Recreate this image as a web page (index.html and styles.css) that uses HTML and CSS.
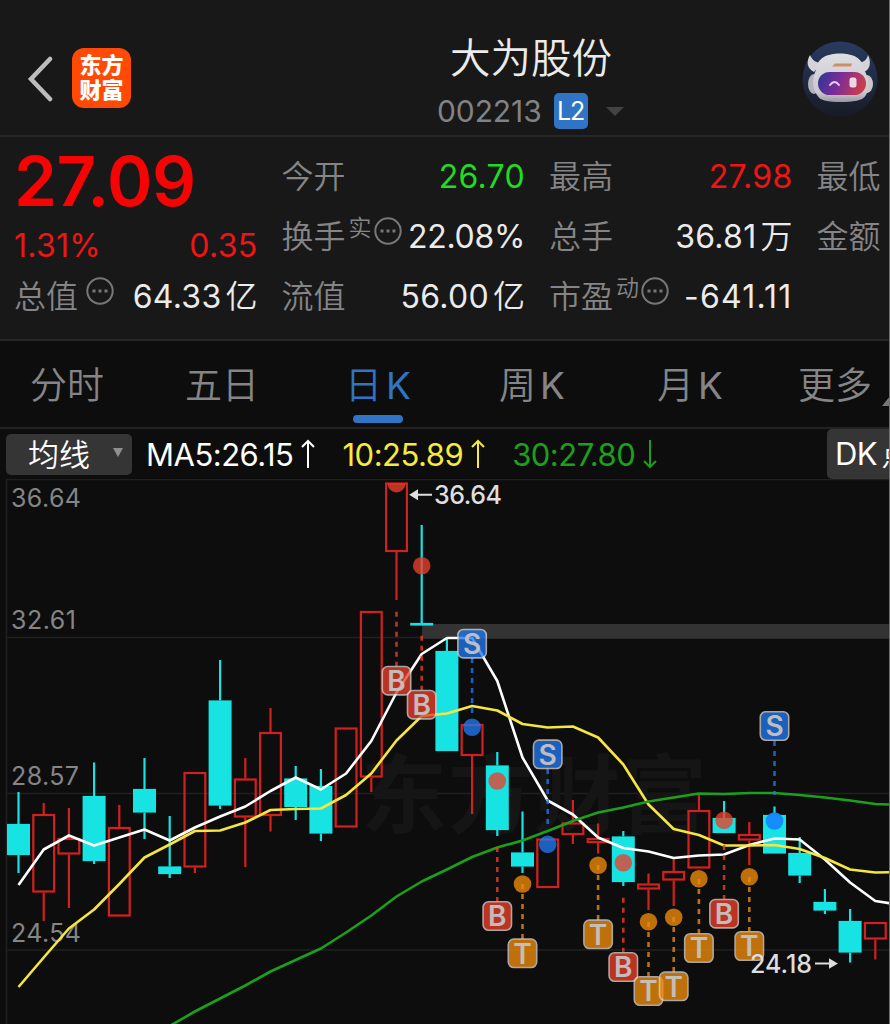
FILE: index.html
```html
<!DOCTYPE html>
<html lang="zh-CN">
<head>
    <meta charset="utf-8">
    <title>大为股份 002213</title>
    <link rel="stylesheet" href="styles.css">
</head>
<body>
    <div class="header">
        <div class="header-left">
            <svg class="back" width="28" height="46" viewBox="0 0 28 46"><path d="M24 3 L5 23 L24 43"/></svg>
            <div class="logo"><span>东方</span><span>财富</span></div>
        </div>
        <div class="title">
            <h1>大为股份</h1>
            <div class="code-row">
                <span class="code">002213</span>
                <span class="level">L2</span>
                <span class="down"></span>
            </div>
        </div>
        <svg class="robot" width="76" height="76" viewBox="0 0 76 76">
            <defs>
                <linearGradient id="sky" x1="0" y1="0" x2="0" y2="1">
                    <stop offset="0" stop-color="#293b5f"/><stop offset="1" stop-color="#181b26"/>
                </linearGradient>
                <linearGradient id="shell" x1="0" y1="0" x2="0" y2="1">
                    <stop offset="0" stop-color="#dedde2"/><stop offset="0.8" stop-color="#cbc9d0"/><stop offset="1" stop-color="#9998a3"/>
                </linearGradient>
                <linearGradient id="visor" x1="0" y1="0" x2="1" y2="0.2">
                    <stop offset="0" stop-color="#293698"/><stop offset="0.5" stop-color="#7c2c96"/><stop offset="1" stop-color="#c83c50"/>
                </linearGradient>
            </defs>
            <circle cx="38" cy="38" r="37.5" fill="url(#sky)"/>
            <path d="M8 14 C4 21 5 27 12 31 L20 22 C14 22 10 19 8 14 Z M66 14 C69 20 69 28 62 31 L54 22 C61 22 65 19 66 14 Z" fill="#d4d3d8"/>
            <ellipse cx="12" cy="43" rx="6" ry="10" fill="#b3b2bd"/>
            <ellipse cx="65" cy="43" rx="6" ry="9" fill="#c8c7ce"/>
            <path d="M14 29 C15 17 25 12.500 38 12.500 C51 12.500 61 17 62 29 C67 36 68 47 64 54 C61 60 51 61 39 61 C26 61 18 60 15 54 C10 47 10 37 14 29 Z" fill="url(#shell)"/>
            <path d="M30 25.500L33 22.500H50L49 25.500Z" fill="#cf8f64"/>
            <rect x="16" y="31" width="48" height="23" rx="11.5" fill="url(#visor)"/>
            <path d="M28 44 Q32.500 38 37 44" stroke="#d8d4ef" stroke-width="2" fill="none" stroke-linecap="round"/>
            <rect x="47.500" y="36.500" width="7" height="10" rx="2.500" fill="#ead9e4"/>
        </svg>
    </div>

    <div class="quote">
        <div class="col first">
            <div class="price">27.09</div>
            <div class="item change red"><span>1.31%</span><span>0.35</span></div>
            <div class="item"><label>总值 <svg class="more" viewBox="0 0 28 28"><circle cx="14" cy="14" r="12.700"/><path d="M6.500 14h3M12.500 14h3M18.500 14h3"/></svg></label><span>64.33<i>亿</i></span></div>
        </div>
        <div class="col">
            <div class="item"><label>今开</label><span class="green">26.70</span></div>
            <div class="item"><label>换手<sup>实</sup><svg class="more" viewBox="0 0 28 28"><circle cx="14" cy="14" r="12.700"/><path d="M6.500 14h3M12.500 14h3M18.500 14h3"/></svg></label><span class="tight">22.08%</span></div>
            <div class="item"><label>流值</label><span>56.00<i>亿</i></span></div>
        </div>
        <div class="col">
            <div class="item"><label>最高</label><span class="red">27.98</span></div>
            <div class="item"><label>总手</label><span>36.81<i>万</i></span></div>
            <div class="item"><label>市盈<sup>动</sup><svg class="more" viewBox="0 0 28 28"><circle cx="14" cy="14" r="12.700"/><path d="M6.500 14h3M12.500 14h3M18.500 14h3"/></svg></label><span class="wide">-641.11</span></div>
        </div>
        <div class="col cut">
            <div class="item"><label>最低</label></div>
            <div class="item"><label>金额</label></div>
        </div>
    </div>

    <div class="tabs">
        <div class="tab">分时</div>
        <div class="tab">五日</div>
        <div class="tab active">日<b>K</b></div>
        <div class="tab">周<b>K</b></div>
        <div class="tab">月<b>K</b></div>
        <div class="tab last">更多<span class="corner"></span></div>
    </div>

    <div class="ma-bar">
        <div class="select">均线<span class="caret"></span></div>
        <div class="ma white">MA5:26.15<svg width="14" height="30" viewBox="0 0 14 30"><path d="M7 29V2M1 8L7 2L13 8"/></svg></div>
        <div class="ma yellow">10:25.89<svg width="14" height="30" viewBox="0 0 14 30"><path d="M7 29V2M1 8L7 2L13 8"/></svg></div>
        <div class="ma dgreen">30:27.80<svg width="14" height="30" viewBox="0 0 14 30"><path d="M7 1V28M1 22L7 28L13 22"/></svg></div>
        <div class="dk">DK<span>点</span></div>
    </div>

    <svg id="chart" class="chart" width="889" height="545" viewBox="0 479 889 545"></svg>

    <script src="chart.js"></script>
</body>
</html>
```

FILE: styles.css
```css
* {
    box-sizing: border-box;
}
html {
    overflow: hidden;
}
body {
    margin: 0;
    width: 890px;
    height: 1024px;
    overflow: hidden;
    border-right: 1px solid #6f6f6f;
    background: #0d0d0d;
    color: #ebebeb;
    font-family: Inter, "Noto Sans CJK SC", sans-serif;
}
.header {
    display: flex;
    justify-content: space-between;
    height: 137px;
    background: #181818;
    border-bottom: 2px solid #272727;
}
.header-left {
    display: flex;
    width: 260px;
    padding: 48px 0 0 26px;
}
.back {
    margin: 8px 18px 0 0;
}
.back path {
    fill: none;
    stroke: #bdbdbd;
    stroke-width: 4.5;
    stroke-linecap: round;
}
.logo {
    display: flex;
    flex-direction: column;
    align-items: center;
    justify-content: center;
    width: 59px;
    height: 60px;
    border-radius: 12px;
    background: #ff4a06;
    color: #fff;
    font-size: 22px;
    font-weight: 900;
    line-height: 25px;
}
.title {
    width: 330px;
    padding-top: 34px;
    text-align: center;
}
h1 {
    margin: 0;
    font-size: 40.5px;
    font-weight: 350;
    line-height: 50px;
}
.code-row {
    display: flex;
    align-items: center;
    height: 36px;
    margin: 9px 0 0 71px;
}
.code {
    color: #828284;
    font-size: 30px;
    font-weight: 400;
    letter-spacing: -0.1px;
}
.level {
    width: 34px;
    height: 36px;
    margin-left: 12px;
    border-radius: 5px;
    background: #2f74c5;
    color: #fff;
    font-size: 25px;
    line-height: 37px;
    letter-spacing: -1px;
}
.down {
    margin-left: 18px;
    border: 9px solid transparent;
    border-top-color: #434343;
    border-bottom: 0;
}
.robot {
    margin: 41px 11px 0 0;
}
.quote {
    display: flex;
    gap: 24px;
    height: 204px;
    padding: 10px 0 0 14px;
    background: #181818;
    border-bottom: 2px solid #272727;
}
.col {
    flex: none;
    width: 243.5px;
}
.cut {
    width: 70px;
}
.item {
    display: flex;
    justify-content: space-between;
    align-items: center;
    height: 60px;
    font-size: 32px;
    white-space: nowrap;
    font-weight: 350;
}
.item label {
    display: flex;
    align-items: center;
    line-height: 44px;
    padding-bottom: 1px;
    color: #858587;
}
.item > span {
    line-height: 44px;
    font-weight: 400;
    letter-spacing: 0.3px;
}
.item > .tight {
    letter-spacing: -0.3px;
}
.item > .wide {
    letter-spacing: 1.2px;
}
.item i {
    font-style: normal;
    font-weight: 350;
    letter-spacing: 0;
    margin-left: 4px;
}
.item sup {
    font-size: 23px;
    line-height: 24px;
    margin: 0 2px 18px 3px;
    vertical-align: baseline;
}
.change {
    padding-top: 17px;
}
.more {
    width: 28px;
    height: 28px;
    margin-bottom: 12px;
    fill: none;
    stroke: #77777a;
    stroke-width: 2;
}
.first .more {
    margin-left: 8px;
}
.more path {
    stroke-width: 3;
}
.price {
    height: 60px;
    color: #f60404;
    font-size: 69px;
    font-weight: 560;
    line-height: 68px;
    letter-spacing: -0.4px;
}
.red {
    color: #f01515;
}
.green {
    color: #1fdd1f;
}
.tabs {
    display: grid;
    grid-template-columns: 155px 163px 151px 158px 141px 91px;
    height: 88px;
    padding-left: 30px;
    border-bottom: 2px solid #222;
    color: #858587;
    font-size: 37px;
    font-weight: 350;
    line-height: 89px;
}
.tab {
    position: relative;
    white-space: nowrap;
}
.tab:nth-child(3) {
    margin-left: -3px;
}
.tab b {
    font-weight: 400;
    margin-left: 4px;
}
.active {
    color: #2f74c5;
}
.active::after {
    content: "";
    position: absolute;
    left: 8px;
    bottom: 7px;
    width: 50px;
    height: 8px;
    border-radius: 4px;
    background: #2f74c5;
}
.last {
    display: flex;
    overflow: hidden;
}
.corner {
    align-self: flex-end;
    flex: none;
    margin: 0 0 24px 10px;
    border-left: 8px solid transparent;
    border-bottom: 10px solid #77777a;
}
.ma-bar {
    display: flex;
    align-items: center;
    height: 50px;
    padding-left: 6px;
    font-size: 31px;
    font-weight: 400;
    white-space: nowrap;
    letter-spacing: -0.5px;
}
.select {
    display: flex;
    align-items: center;
    width: 126px;
    height: 41px;
    margin-right: 14px;
    padding: 0 0 3px 22px;
    border-radius: 5px;
    background: #353535;
    color: #fff;
    font-weight: 350;
    letter-spacing: 0;
}
.caret {
    margin-left: 23px;
    border: 5.5px solid transparent;
    border-top: 9px solid #909090;
    border-bottom: 0;
}
.ma {
    display: flex;
    align-items: center;
    margin-right: 27px;
}
.ma svg {
    margin-left: 8px;
    fill: none;
    stroke: currentColor;
    stroke-width: 2;
}
.white {
    color: #fff;
}
.yellow {
    color: #f7ea3e;
}
.dgreen {
    color: #1ca01c;
}
.dk {
    width: 62px;
    height: 50px;
    margin-left: auto;
    padding-left: 8px;
    border-radius: 5px 0 0 5px;
    background: #353535;
    color: #fff;
    line-height: 50px;
    overflow: hidden;
}
.dk span {
    margin-left: 4px;
    font-weight: 350;
}
.chart {
    display: block;
}
.grid {
    stroke: #202020;
    stroke-width: 1.6;
    fill: none;
}
.watermark {
    fill: #151515;
    font-size: 86px;
    font-weight: 700;
}
.axis {
    fill: #858587;
    font-size: 25px;
}
.peak {
    fill: #dedede;
    font-size: 25px;
    font-weight: 450;
}
.arrow {
    stroke: #dedede;
    stroke-width: 2;
    fill: #dedede;
}
.up {
    fill: none;
    stroke: #d3201f;
    stroke-width: 2.2;
}
.fall {
    fill: #17e3e3;
    stroke: #17e3e3;
    stroke-width: 2.2;
}
.line {
    fill: none;
    stroke-width: 2.6;
    stroke-linejoin: round;
}
.mark {
    fill: #c5c3c3;
    font-size: 28px;
    font-weight: 600;
    text-anchor: middle;
}
```

FILE: chart.js
```js
const NS = 'http://www.w3.org/2000/svg';
const chart = document.getElementById('chart');
const xAt = i => 18.5 + i * 25.2;

function add(tag, attrs, text) {
    const el = document.createElementNS(NS, tag);
    for (const key in attrs) el.setAttribute(key, attrs[key]);
    if (text) el.textContent = text;
    chart.appendChild(el);
    return el;
}

// type, high, body top, body bottom, low
const candles = [
    ['d', 792, 824, 855, 873], ['u', 803, 814, 892.5, 921], ['u', 808, 838, 854.5, 908], ['d', 762.5, 796, 861, 864],
    ['u', 805, 827, 916.5, 916.5], ['d', 758, 789, 812.5, 839], ['d', 816, 866.5, 874, 878], ['u', 772, 772, 867.5, 873],
    ['d', 660, 700.5, 805.5, 809], ['u', 758, 778.5, 817.5, 867], ['u', 708, 732, 816, 831.5], ['d', 766, 778.5, 807, 820],
    ['d', 769, 786, 833.5, 841], ['u', 727.5, 727.5, 827.5, 827.5], ['u', 611, 611, 777.5, 792], ['u', 482.5, 482.5, 552, 600],
    ['d', 525, 623, 625.5, 625.5], ['d', 639, 651, 751, 751], ['u', 724, 724, 756, 814], ['d', 752, 765.5, 830, 836],
    ['d', 811.5, 852.5, 866.5, 873], ['u', 838.5, 838.5, 888, 888], ['u', 800, 822.5, 835, 844], ['u', 823.5, 838, 843, 853.5],
    ['d', 831, 836.5, 882, 886], ['u', 873.5, 883.5, 889.5, 910], ['u', 859, 871, 880.5, 906], ['u', 795, 810, 868.5, 868.5],
    ['d', 801, 818, 833, 833], ['u', 822, 834, 840.5, 865], ['d', 806.5, 815, 853.5, 853.5], ['d', 837, 853, 875.5, 883],
    ['d', 889, 902, 910.5, 914], ['d', 909, 921, 952.5, 962.5], ['u', 922, 922, 939.5, 959.5]
];
const ma5 = [885, 849.5, 835.5, 845.5, 837.5, 829.5, 840.5, 827.5, 816.5, 806.5, 791, 777.5, 789.5, 773.5, 741, 692.5, 654, 638, 638,
    681, 757.5, 800.5, 814.5, 837.5, 848, 851.5, 858, 855.5, 854.5, 845, 838.5, 839.5, 859.5, 882.5, 901, 905];
const ma10 = [987, 957.5, 928.5, 909.5, 884, 857.5, 844.5, 831, 830.5, 822.5, 810, 809, 808.5, 795, 773.5, 740.5, 716, 713.5, 706,
    710.5, 724, 727.5, 726.5, 737.5, 764.5, 804.5, 829, 835, 845.5, 845.5, 845, 849, 858, 869.5, 872.5, 872];
const ma30 = [1026, 1011.5, 998.5, 985.5, 971.5, 960, 948.5, 932.5, 915.5, 896.5, 881.5, 869.5, 857, 847.5, 840.5, 831, 821, 812.5,
    807.5, 801.5, 797.5, 793.5, 794, 793, 793, 795, 797.5, 800.5, 804, 805];

// index, letter, badge y, dot y, dash start, dash end
const trades = [
    [15, 'B', 680.7, 483.5, 611.7, 666], [16, 'B', 704.7, 565.7, 635.7, 690], [18, 'S', 643.7, 727.3, 658, 714],
    [19, 'B', 916, 781, 847, 901], [20, 'T', 953.3, 884, 884, 939], [21, 'S', 754.3, 844.3, 769, 824],
    [23, 'T', 934.3, 865.3, 865, 920], [24, 'B', 967, 862.7, 897.7, 952], [25, 'T', 991, 921.7, 922, 976],
    [26, 'T', 986.3, 917.3, 917, 972], [27, 'T', 948, 878.7, 879, 933], [28, 'B', 913.7, 820.3, 845, 899],
    [29, 'T', 946, 876.7, 877, 931], [30, 'S', 726, 821, 741, 795]
];
const colors = { B: '#ec3f2a', S: '#2078f0', T: '#f08c0a' };

add('path', { class: 'grid', d: 'M6.5 1024V479.5H890M6.5 637.500H890M6.5 793.500H890M6.5 950H890' });
add('text', { class: 'watermark', x: 361, y: 827, textLength: 346 }, '东方财富');
add('rect', { x: 422, y: 624, width: 468, height: 14.7, fill: '#333' });
[['36.64', 506.5], ['32.61', 628.5], ['28.57', 785], ['24.54', 942]].forEach(([t, y]) =>
    add('text', { class: 'axis', x: 11, y: y, textLength: t === '32.61' ? 65 : t === '28.57' ? 68 : 70 }, t));

candles.forEach(([type, high, top, bottom, low], i) => {
    const x = xAt(i);
    const cls = type === 'u' ? 'up' : 'fall';
    add('path', { class: cls, d: `M${x} ${high}V${top}M${x} ${bottom}V${low}` });
    add('rect', { class: cls, x: x - 10.4, y: top + 1, width: 20.8, height: Math.max(bottom - top - 2, 0.5) });
});

function line(values, start, color) {
    add('polyline', { class: 'line', stroke: color, points: values.map((v, i) => `${xAt(i + start)},${v}`).join(' ') });
}
line(ma5, 0, '#fff');
line(ma10, 0, '#f5e640');
line(ma30, 6, '#1ca01c');

trades.forEach(([i, letter, y, dot, from, to]) => {
    const x = xAt(i);
    const color = colors[letter];
    if (i === 15) {
        // this dot is clipped by the top of the plot
        add('path', { d: `M${x - 9} 483.500A9 9 0 0 0 ${x + 9} 483.500Z`, fill: color, opacity: 0.78 });
    } else {
        add('circle', { cx: x, cy: dot, r: 8.8, fill: i === 30 ? '#1688ff' : color, opacity: i === 30 ? 0.95 : 0.78 });
    }
    add('path', { d: `M${x} ${from}V${to}`, stroke: color, 'stroke-width': 2.6, 'stroke-dasharray': '5 5', opacity: 0.78 });
    add('rect', { x: x - 14.2, y: y - 14.2, width: 28.4, height: 28.4, rx: 5.5, fill: color, stroke: '#dcd2cc', 'stroke-width': 1.6, opacity: 0.78 });
    add('text', { class: 'mark', x: x, y: y + 10.2, opacity: 0.95 }, letter);
});

add('text', { class: 'peak', x: 434, y: 504, textLength: 68 }, '36.64');
add('path', { class: 'arrow', d: 'M432 494.800H414M411 494.800L417 491V498.500Z' });
add('text', { class: 'peak', x: 750, y: 972.5, textLength: 62 }, '24.18');
add('path', { class: 'arrow', d: 'M815 963.500H833M836 963.500L830 960V967Z' });
```
